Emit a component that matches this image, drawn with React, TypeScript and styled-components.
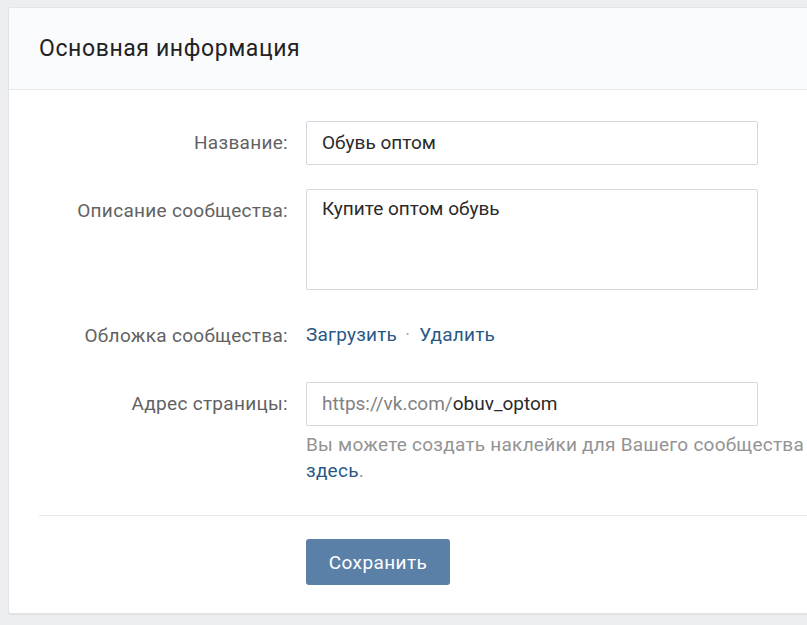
import styled, { createGlobalStyle } from 'styled-components';

const GlobalStyle = createGlobalStyle`
    html, body {
        margin: 0;
        padding: 0;
        background: #edeef0;
        overflow: hidden;
    }
    body {
        font-family: Roboto, "Open Sans", "Liberation Sans", sans-serif;
        -webkit-font-smoothing: antialiased;
    }
`;

const Page = styled.div`
    width: 807px;
    height: 625px;
    padding: 7px 0 0 8px;
    box-sizing: border-box;
    overflow: hidden;
`;

const Card = styled.section`
    width: 840px;
    background: #fff;
    border: 1px solid #e3e4e8;
    border-radius: 3px;
    box-shadow: 0 1px 1px rgba(0, 0, 0, 0.06);
    box-sizing: border-box;
    padding-bottom: 28px;
`;

const Header = styled.header`
    height: 81px;
    display: flex;
    align-items: center;
    padding-left: 30px;
    background: #fafbfc;
    border-bottom: 1px solid #e7e8ec;
    border-radius: 3px 3px 0 0;
    font-size: 23px;
    letter-spacing: 0.6px;
    color: #222;
`;

const Form = styled.div`
    display: grid;
    grid-template-columns: 279px 452px;
    column-gap: 18px;
    row-gap: 24px;
    padding-top: 31px;
`;

const Label = styled.div`
    text-align: right;
    font-size: 19px;
    letter-spacing: 0.3px;
    line-height: 44px;
    color: #626262;
`;

const Field = styled.div`
    display: flex;
    flex-direction: column;
`;

const Input = styled.div<{ $tall?: boolean }>`
    box-sizing: border-box;
    height: ${p => (p.$tall ? '101px' : '44px')};
    border: 1px solid #d3d9de;
    border-radius: 2px;
    padding: ${p => (p.$tall ? '7px 15px' : '0 15px')};
    display: flex;
    align-items: ${p => (p.$tall ? 'flex-start' : 'center')};
    font-size: 19px;
    line-height: 24px;
    color: #2a2a2a;
    background: #fff;
`;

const Prefix = styled.span`
    color: #828282;
`;

const Links = styled.div`
    height: 44px;
    display: flex;
    align-items: center;
    padding-bottom: 4px;
    box-sizing: border-box;
    font-size: 19px;
    letter-spacing: 0.2px;
    color: #2a5885;
`;

const Dot = styled.span`
    color: #b0b0b0;
    margin: 0 9px 0 8px;
`;

const Hint = styled.div`
    margin-top: 6px;
    font-size: 19px;
    letter-spacing: 0.25px;
    line-height: 26px;
    color: #939393;
    white-space: nowrap;
`;

const HintLink = styled.span`
    color: #2a5885;
`;

const Divider = styled.hr`
    border: none;
    border-top: 1px solid #e7e8ec;
    margin: 31px 30px 23px 30px;
`;

const Actions = styled.div`
    padding-left: 297px;
`;

const SaveButton = styled.button`
    width: 144px;
    height: 46px;
    border: none;
    border-radius: 3px;
    background: #5b80a8;
    color: #fff;
    font-family: Roboto, "Liberation Sans", sans-serif;
    font-size: 19px;
    letter-spacing: 0.4px;
    cursor: pointer;
`;

const App = () => {
    return (
        <Page>
            <GlobalStyle />
            <Card>
                <Header>Основная информация</Header>
                <Form>
                    <Label>Название:</Label>
                    <Input>Обувь оптом</Input>

                    <Label>Описание сообщества:</Label>
                    <Input $tall>Купите оптом обувь</Input>

                    <Label>Обложка сообщества:</Label>
                    <Links>
                        Загрузить<Dot>·</Dot>Удалить
                    </Links>

                    <Label>Адрес страницы:</Label>
                    <Field>
                        <Input>
                            <Prefix>https://vk.com/</Prefix>obuv_optom
                        </Input>
                        <Hint>
                            Вы можете создать наклейки для Вашего сообщества
                            <br />
                            <HintLink>здесь</HintLink>.
                        </Hint>
                    </Field>
                </Form>
                <Divider />
                <Actions>
                    <SaveButton>Сохранить</SaveButton>
                </Actions>
            </Card>
        </Page>
    );
};

export default App;
